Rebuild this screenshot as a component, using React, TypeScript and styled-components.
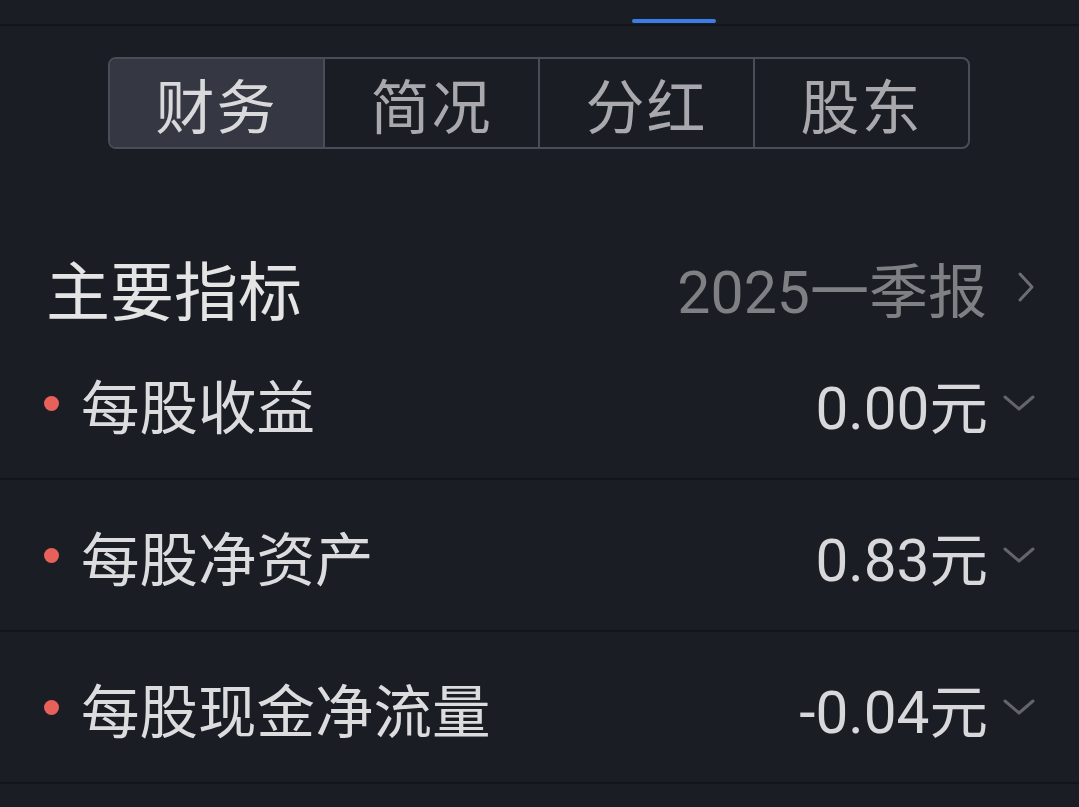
import React from 'react';
import styled, { createGlobalStyle } from 'styled-components';

const GlobalStyle = createGlobalStyle`
	html, body {
		margin: 0;
		padding: 0;
		background: #1b1d25;
	}
	body {
		font-family: Roboto, 'Noto Sans CJK SC', sans-serif;
		color: #dcdcdc;
	}
`;

const Page = styled.div`
	width: 1079px;
	height: 807px;
	background: #1b1d25;
	overflow: hidden;
	display: flex;
	flex-direction: column;
`;

const TopBar = styled.div`
	height: 26px;
	border-bottom: 2px solid #13151b;
	display: flex;
	align-items: flex-end;
	padding-left: 632px;
	box-sizing: border-box;
`;

const Indicator = styled.div`
	width: 84px;
	height: 4px;
	border-radius: 2px;
	background: #3b7de3;
	margin-bottom: 1px;
`;

const Segmented = styled.div`
	margin: 31px 0 0 108px;
	width: 862px;
	height: 92px;
	box-sizing: border-box;
	border: 2px solid #4a4d57;
	border-radius: 8px;
	display: flex;
	overflow: hidden;
`;

const Segment = styled.div<{ $active?: boolean }>`
	flex: 1;
	display: flex;
	align-items: center;
	justify-content: center;
	font-family: 'Noto Sans CJK SC', sans-serif;
	font-size: 59px;
	letter-spacing: 2px;
	color: ${(p) => (p.$active ? '#d9d9db' : '#a9a9ad')};
	background: ${(p) => (p.$active ? '#353843' : 'transparent')};
	& + & {
		border-left: 2px solid #4a4d57;
	}
`;

const SectionHead = styled.div`
	margin-top: 97px;
	height: 82px;
	display: flex;
	align-items: center;
	justify-content: space-between;
	padding: 0 44px 0 46px;
`;

const Title = styled.div`
	font-family: 'Noto Sans CJK SC', sans-serif;
	font-size: 64px;
	font-weight: 400;
	color: #e4e4e4;
`;

const Period = styled.div`
	display: flex;
	align-items: center;
	gap: 30px;
	font-size: 59px;
	color: #7f8084;
	font-family: Roboto, 'Noto Sans CJK SC', sans-serif;
`;

const Row = styled.div`
	height: 152px;
	box-sizing: border-box;
	border-bottom: 2px solid #13151b;
	display: flex;
	align-items: center;
	padding: 0 43px 0 44px;
`;

const Dot = styled.span`
	width: 15px;
	height: 15px;
	border-radius: 50%;
	background: #e8605a;
	margin-right: 22px;
	flex: none;
`;

const Label = styled.div`
	flex: 1;
	font-family: 'Noto Sans CJK SC', sans-serif;
	font-size: 58.5px;
	color: #dcdcde;
`;

const Value = styled.div`
	font-family: Roboto, 'Noto Sans CJK SC', sans-serif;
	font-size: 58.5px;
	color: #d8d8da;
	margin-right: 14px;
`;

const Chevron = styled.svg`
	flex: none;
`;

const rows = [
	{ label: '每股收益', value: '0.00元' },
	{ label: '每股净资产', value: '0.83元' },
	{ label: '每股现金净流量', value: '-0.04元' },
];

const tabs = ['财务', '简况', '分红', '股东'];

export default function App() {
	return (
		<Page>
			<GlobalStyle />
			<TopBar>
				<Indicator />
			</TopBar>
			<Segmented>
				{tabs.map((t, i) => (
					<Segment key={t} $active={i === 0}>
						{t}
					</Segment>
				))}
			</Segmented>
			<SectionHead>
				<Title>主要指标</Title>
				<Period>
					2025一季报
					<Chevron width="18" height="32" viewBox="0 0 18 32">
						<path d="M3 3 L15 16 L3 29" fill="none" stroke="#6d6e73" strokeWidth="3" strokeLinecap="round" strokeLinejoin="round" />
					</Chevron>
				</Period>
			</SectionHead>
			{rows.map((r) => (
				<Row key={r.label}>
					<Dot />
					<Label>{r.label}</Label>
					<Value>{r.value}</Value>
					<Chevron width="34" height="20" viewBox="0 0 34 20">
						<path d="M3 4 L17 16 L31 4" fill="none" stroke="#64656b" strokeWidth="3" strokeLinecap="round" strokeLinejoin="round" />
					</Chevron>
				</Row>
			))}
		</Page>
	);
}
